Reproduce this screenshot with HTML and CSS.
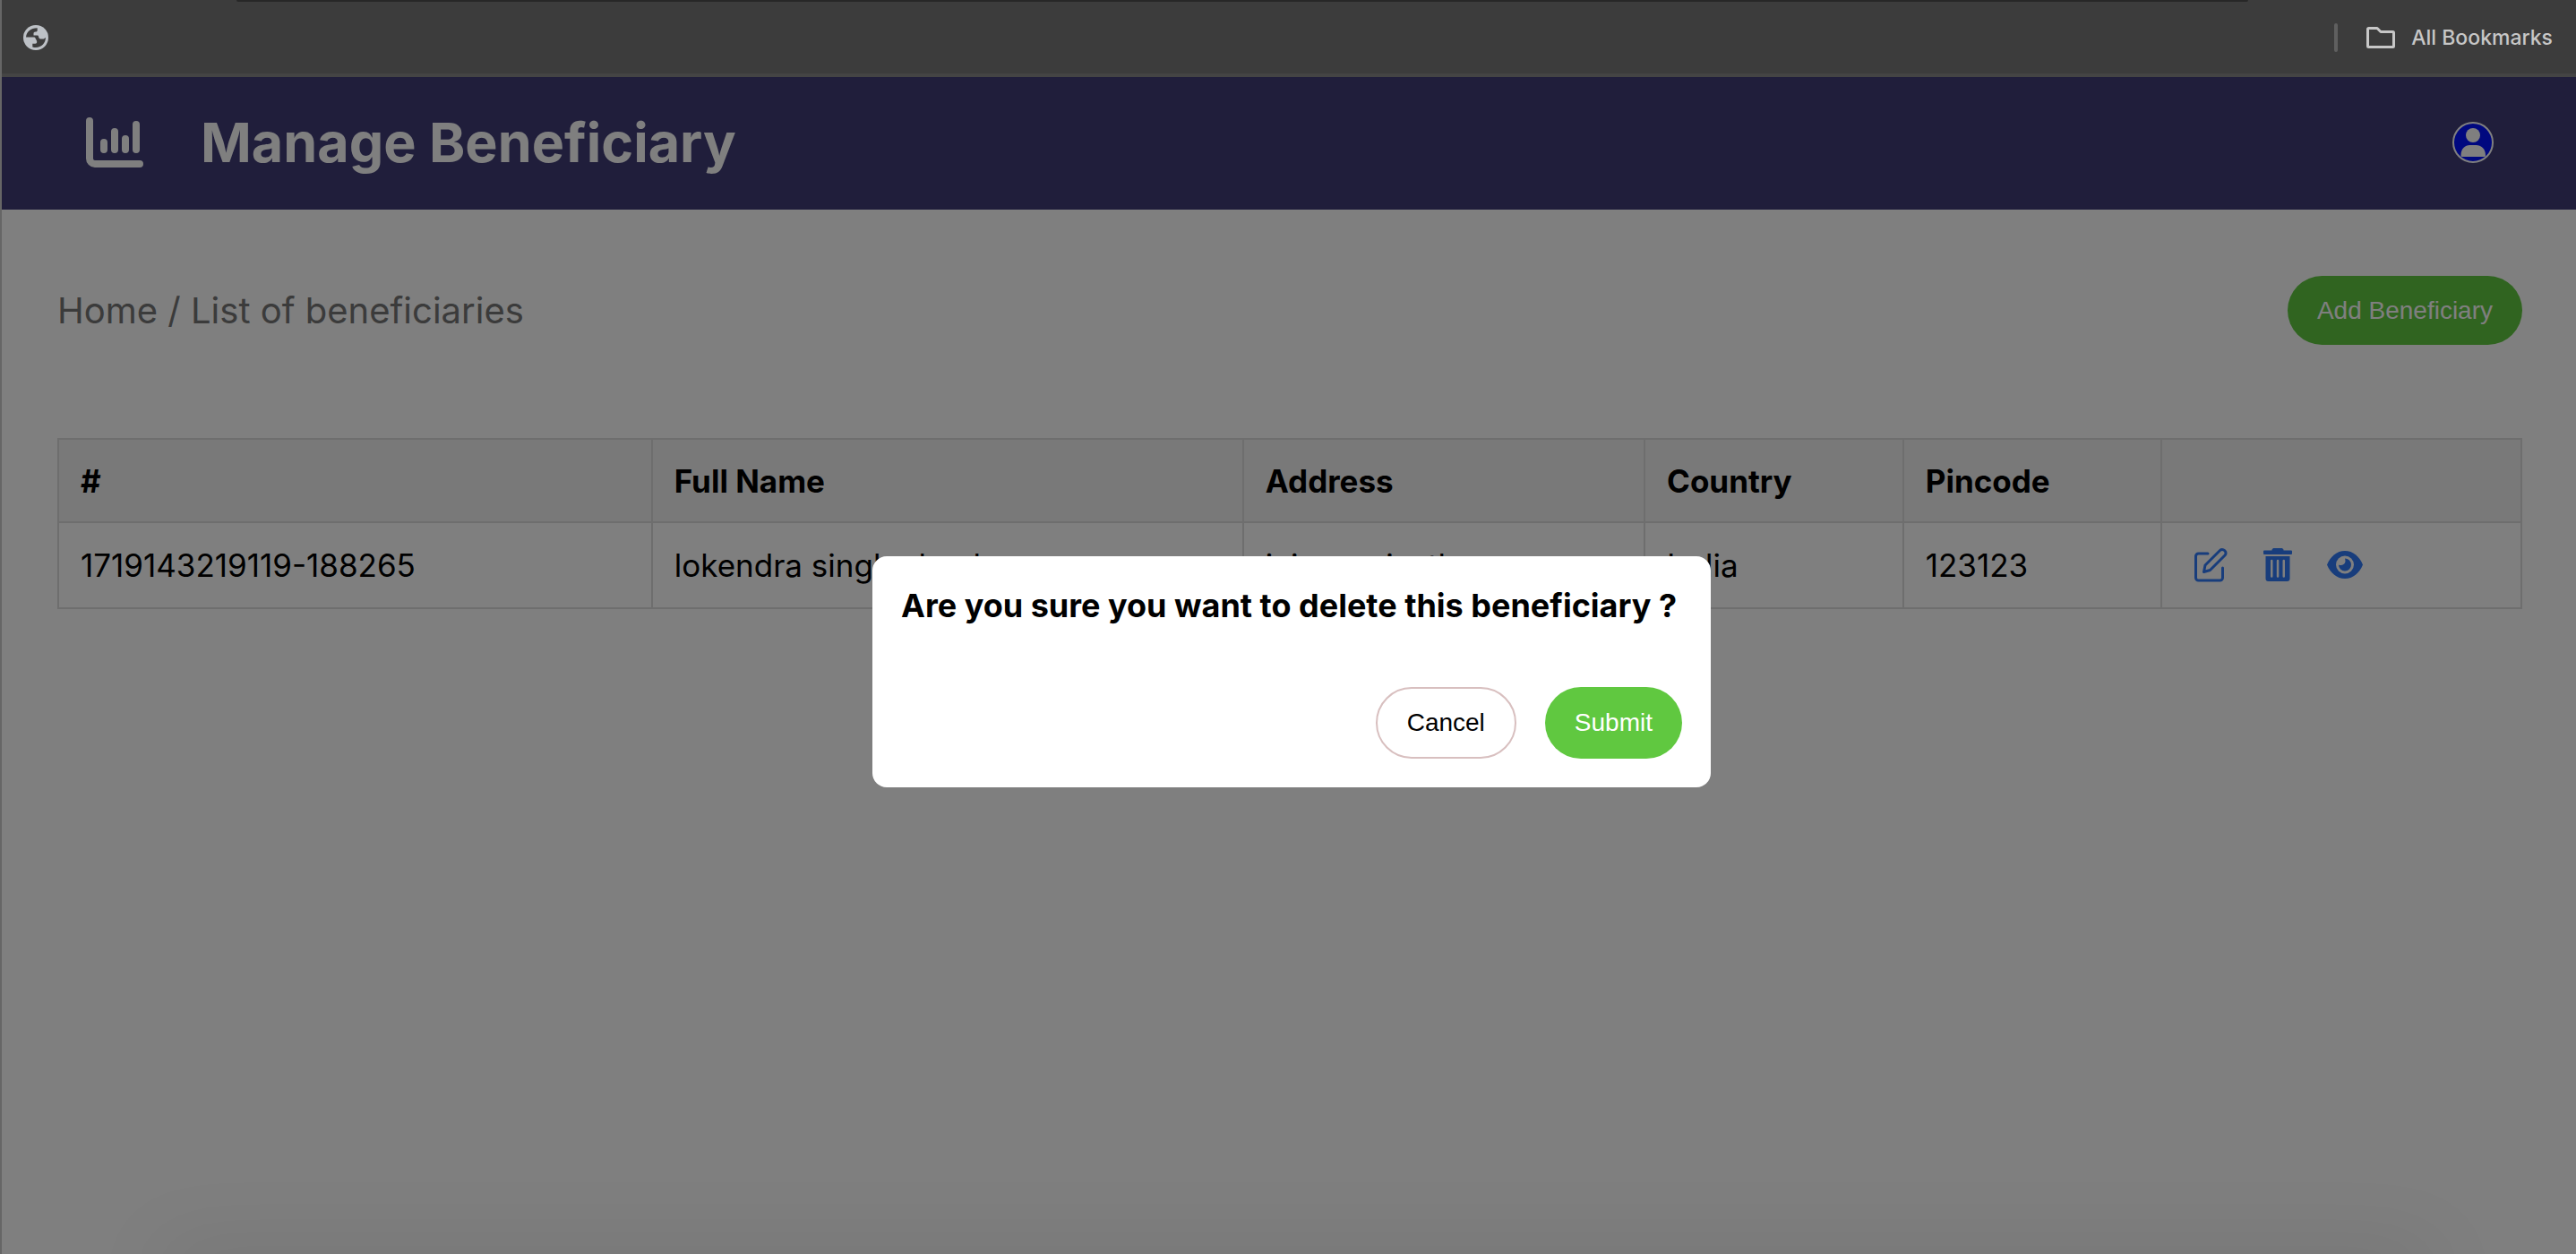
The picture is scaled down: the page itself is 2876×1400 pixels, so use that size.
FILE: index.html
```
<!DOCTYPE html>
<html lang="en">
<head>
  <meta charset="utf-8">
  <title>Manage Beneficiary</title>
  <link rel="stylesheet" href="styles.css">
</head>
<body>
  <div class="bookmarks">
    <svg class="globe" viewBox="0 0 28 28" aria-hidden="true">
      <circle cx="14" cy="14" r="14" fill="#bdc1c6"/>
      <path d="M3 13.5C3.4 8 8 3.2 15.7 3.2v3c-.3 1-1 1.200-2.200 1.400-1.600.3-2 .8-2 2v2h4c1.200 0 1.500.6 1.700 1.800.3 1.500 1.300 2 2.800 2h2.500c1.200 0 1.500-.9 2.400-1.300C24.900 20 20.500 25 14 25c-1.300 0-2.500-.2-3.700-.6v-3.700h3c1.300 0 1.900-.6 1.900-1.900 0-1.800-1-2.300-1.400-3.600-.3-1.200-.9-1.700-2.300-1.700z" fill="#3c3c3c"/>
    </svg>
    <span class="bookmarks-divider"></span>
    <button class="bookmarks-all" type="button">
      <svg class="folder" viewBox="0 0 32 24" fill="none" stroke="#c7c7c7" stroke-width="3" stroke-linejoin="round" aria-hidden="true">
        <path d="M1.500 2.500a1 1 0 0 1 1-1H12l4 4h13.500a1 1 0 0 1 1 1v15a1 1 0 0 1-1 1h-27a1 1 0 0 1-1-1z"/>
      </svg>
      All Bookmarks
    </button>
  </div>

  <div class="page">
    <header class="header">
      <svg class="chart" viewBox="0 0 64 56" fill="none" stroke="#fff" stroke-width="8" stroke-linecap="round" aria-hidden="true">
        <path d="M4 4v42a6 6 0 0 0 6 6h50M20 28v8M32 16v20M44 24v12M56 8v28"/>
      </svg>
      <h1 class="title">Manage Beneficiary</h1>
      <button class="avatar" type="button" aria-label="Account">
        <svg viewBox="0 0 46 46" aria-hidden="true">
          <circle cx="23" cy="23" r="22" fill="#0010ff" stroke="#fff" stroke-width="2"/>
          <circle cx="23" cy="15" r="8" fill="#fff"/>
          <path d="M9.500 37.500C9.500 30 14 26 19.500 26h7C32 26 37 30 37 37.500c0 1-.8 1.500-2 1.500H11.500c-1.200 0-2-.5-2-1.500z" fill="#fff"/>
        </svg>
      </button>
    </header>

    <main class="main">
      <div class="toolbar">
        <nav class="breadcrumb" aria-label="Breadcrumb"><a href="#home">Home</a> / List of beneficiaries</nav>
        <button class="button button-primary button-add" type="button">Add Beneficiary</button>
      </div>

      <table class="table">
        <colgroup>
          <col class="col-id"><col class="col-name"><col class="col-address"><col class="col-country"><col class="col-pincode"><col>
        </colgroup>
        <thead>
          <tr><th>#</th><th>Full Name</th><th>Address</th><th>Country</th><th>Pincode</th><th></th></tr>
        </thead>
        <tbody>
          <tr>
            <td>1719143219119-188265</td>
            <td>lokendra singh chauhan</td>
            <td>jaipur rajasthan</td>
            <td>India</td>
            <td>123123</td>
            <td>
              <div class="actions">
                <button class="action" type="button" aria-label="Edit">
                  <svg viewBox="0 0 40 40" fill="none" stroke="#307af8" stroke-width="3" stroke-linecap="round" stroke-linejoin="round" aria-hidden="true">
                    <path d="M17 7H6.500a3 3 0 0 0-3 3v24a3 3 0 0 0 3 3h24a3 3 0 0 0 3-3V23"/>
                    <path d="M12.500 27.500 14 20 30.500 3.500a3.500 3.500 0 0 1 5 0l.5.5a3.500 3.500 0 0 1 0 5L19.500 25.500z"/>
                  </svg>
                </button>
                <button class="action" type="button" aria-label="Delete">
                  <svg viewBox="0 0 40 40" fill="#307af8" aria-hidden="true">
                    <path d="M13.500 2.500 15 1h10l1.500 1.500v1H35a1 1 0 0 1 1 1V7a1 1 0 0 1-1 1H5a1 1 0 0 1-1-1V4.500a1 1 0 0 1 1-1h8.500z"/>
                    <path fill-rule="evenodd" d="M6.500 10h27v25a3 3 0 0 1-3 3h-21a3 3 0 0 1-3-3zM12 15v17.500a1 1 0 0 0 2.500 0V15a1 1 0 0 0-2.500 0zm6.800 0v17.500a1 1 0 0 0 2.500 0V15a1 1 0 0 0-2.500 0zm6.700 0v17.500a1 1 0 0 0 2.500 0V15a1 1 0 0 0-2.500 0z"/>
                  </svg>
                </button>
                <button class="action" type="button" aria-label="View">
                  <svg viewBox="0 0 40 40" aria-hidden="true">
                    <path d="M0 19.500C4 10 11 4 20 4s16 6 20 15.500C36 29 29 35 20 35S4 29 0 19.500z" fill="#307af8"/>
                    <circle cx="20" cy="19.500" r="10" fill="#fff"/>
                    <path d="M20 12.500a7 7 0 1 1-7 7c1 .6 2 .7 3 .5 2.500-.2 4.500-2.200 4.500-4.500 0-1-.2-2-.5-3z" fill="#307af8"/>
                  </svg>
                </button>
              </div>
            </td>
          </tr>
        </tbody>
      </table>
    </main>

    <div class="overlay">
      <div class="modal" role="dialog" aria-modal="true" aria-labelledby="modal-title">
        <h2 class="modal-title" id="modal-title">Are you sure you want to delete this beneficiary ?</h2>
        <div class="modal-buttons">
          <button class="button button-outline" type="button">Cancel</button>
          <button class="button button-primary" type="button">Submit</button>
        </div>
      </div>
    </div>
  </div>
</body>
</html>
```
FILE: styles.css
```
* {
  box-sizing: border-box;
}

body {
  display: flex;
  flex-direction: column;
  min-height: 100vh;
  margin: 0;
  border-left: 2px solid #666;
  font-family: Inter, "Noto Sans", sans-serif;
  color: #000;
  background: #fff;
}

button {
  padding: 0;
  border: 0;
  background: none;
  font: inherit;
  color: inherit;
  cursor: pointer;
}

svg {
  display: block;
}

/* Browser bookmarks bar */
.bookmarks {
  position: relative;
  display: flex;
  align-items: center;
  height: 86px;
  padding: 2px 26px 0 24px;
  border-bottom: 4px solid #444;
  background: #3c3c3c;
}

.bookmarks::before {
  content: "";
  position: absolute;
  top: 0;
  left: 262px;
  right: 366px;
  height: 2px;
  border-radius: 0 0 8px 8px;
  background: #272727;
}

.globe {
  width: 28px;
  height: 28px;
}

.bookmarks-divider {
  width: 4px;
  height: 32px;
  margin: 0 32px 0 auto;
  border-radius: 2px;
  background: #5f5f5f;
}

.bookmarks-all {
  display: flex;
  align-items: center;
  gap: 18px;
  font-size: 23px;
  font-weight: 500;
  color: #c7c7c7;
}

.folder {
  width: 32px;
  height: 24px;
}

/* Page */
.page {
  position: relative;
  flex: 1;
}

.header {
  display: flex;
  align-items: center;
  gap: 64px;
  height: 148px;
  padding: 0 92px 2px 94px;
  background: #403c76;
}

.chart {
  width: 64px;
  height: 56px;
}

.title {
  margin: 0;
  font-size: 61px;
  font-weight: 700;
  color: #fff;
}

.avatar {
  width: 46px;
  height: 46px;
  margin-left: auto;
}

.main {
  padding: 74px 60px 74px 62px;
}

.toolbar {
  display: flex;
  align-items: center;
  justify-content: space-between;
  margin-bottom: 104px;
}

.breadcrumb {
  font-size: 40px;
  color: #767676;
}

.breadcrumb a {
  color: inherit;
  text-decoration: none;
}

.button {
  height: 80px;
  padding: 0 33px;
  border-radius: 40px;
  font-family: "Liberation Sans", Arial, sans-serif;
  font-size: 28px;
}

.button-primary {
  color: #fff;
  background: #60c840;
}

.button-add {
  height: 77px;
}

.button-outline {
  border: 2px solid #d8bfbf;
}

.table {
  width: 100%;
  table-layout: fixed;
  border-collapse: collapse;
  font-size: 35px;
}

.col-id {
  width: 24.1%;
}

.col-name {
  width: 24%;
}

.col-address {
  width: 16.3%;
}

.col-country,
.col-pincode {
  width: 10.5%;
}

.table th,
.table td {
  padding: 0 24px;
  border: 2px solid #ddd;
  text-align: left;
}

.table th {
  height: 93px;
  font-weight: 700;
  background: #f2f2f2;
}

.table td {
  height: 96px;
}

.actions {
  display: flex;
  gap: 35px;
  padding-left: 10px;
}

.action {
  width: 40px;
  height: 40px;
}

/* Confirmation dialog */
.overlay {
  position: absolute;
  inset: 0;
  display: flex;
  align-items: center;
  justify-content: center;
  padding: 14px 0 0 6px;
  overflow: hidden;
  background: rgba(0, 0, 0, 0.5);
}

.overlay::after {
  content: "";
  position: absolute;
  top: 100%;
  left: 180px;
  right: 160px;
  height: 40px;
  box-shadow: 0 0 90px rgba(0, 0, 0, 0.12);
}

.modal {
  width: 936px;
  padding: 32px;
  border-radius: 16px;
  background: #fff;
}

.modal-title {
  margin: 0 0 68px;
  font-size: 36px;
  line-height: 46px;
  font-weight: 700;
}

.modal-buttons {
  display: flex;
  justify-content: flex-end;
  gap: 32px;
}
```
